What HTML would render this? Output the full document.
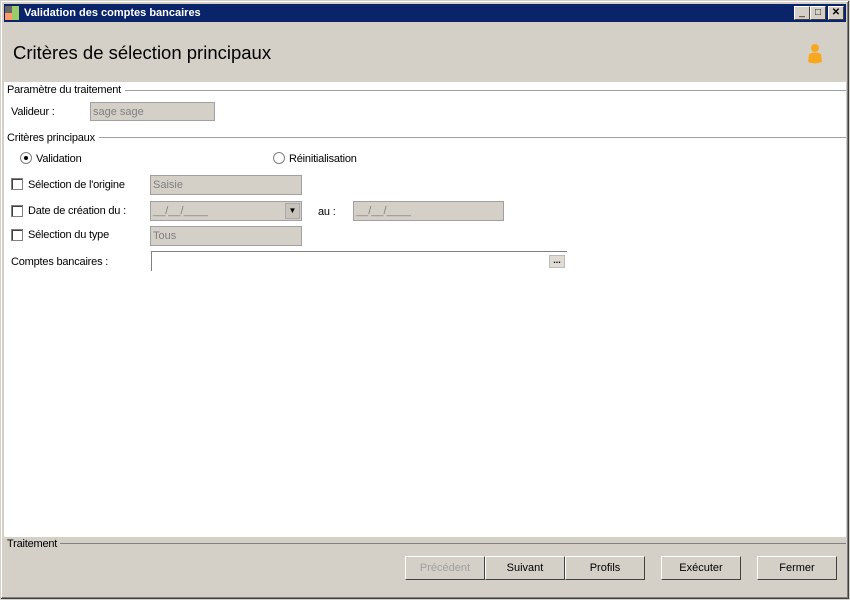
<!DOCTYPE html><html><head><style>
*{margin:0;padding:0;box-sizing:border-box}
body{width:850px;height:600px;background:#d4d0c8;font-family:"Liberation Sans",sans-serif;font-size:11px;color:#000;position:relative;overflow:hidden}
.a{position:absolute}
.win{left:0;top:0;width:850px;height:600px;border:1px solid #d4d0c8;box-shadow:inset -1px -1px #404040,inset 1px 1px #fff,inset -2px -2px #808080}
.title{left:4px;top:4px;width:842px;height:18px;background:#0a246a;color:#fff;font-weight:bold;font-size:11px;line-height:18px;padding-left:20px}
.tb{top:6px;width:16px;height:14px;background:#d4d0c8;border:1px solid;border-color:#fff #404040 #404040 #fff;font-size:10px;text-align:center;line-height:12px;color:#000}
.white{left:4px;top:82px;width:842px;height:455px;background:#fff}
.lbl{font-size:11px;white-space:nowrap;letter-spacing:-0.2px}
.gl{background:#fff;padding-right:4px}
.inp{background:#d4d0c8;border:1px solid #a0a0a0;color:#808080;padding-left:2px;line-height:19px;font-size:11px}
.line{height:1px;background:#a0a0a0}
.cb{width:12px;height:12px;border:1px solid #808080;background:#fff;box-shadow:inset 1px 1px #404040}
.rd{width:12px;height:12px;border-radius:50%;border:1px solid #808080;background:#fff}
.btn{top:556px;height:24px;background:#d4d0c8;border:1px solid;border-color:#fff #404040 #404040 #fff;text-align:center;line-height:22px;font-size:11px}
</style></head><body>
<div class="a win"></div>
<div class="a title">Validation des comptes bancaires</div>
<div class="a" style="left:5px;top:6px;width:7px;height:7px;background:#666"></div>
<div class="a" style="left:12px;top:6px;width:7px;height:14px;background:#9c6"></div>
<div class="a" style="left:5px;top:13px;width:7px;height:7px;background:#f96"></div>
<div class="a tb" style="left:794px">_</div>
<div class="a tb" style="left:810px">□</div>
<div class="a tb" style="left:828px;font-weight:bold">✕</div>
<div class="a" style="left:13px;top:42px;font-size:18.5px">Critères de sélection principaux</div>
<svg class="a" style="left:806px;top:43px" width="18" height="22"><circle cx="9" cy="5" r="4" fill="#f8a820"/><path d="M3 11 Q9 8 15 11 L16 19 Q9 22 2 19Z" fill="#f8a820"/></svg>
<div class="a white"></div>
<div class="a line" style="left:100px;top:90px;width:746px"></div>
<div class="a lbl gl" style="left:7px;top:84px">Paramètre du traitement</div>
<div class="a lbl" style="left:11px;top:106px">Valideur :</div>
<div class="a inp" style="left:90px;top:102px;width:125px;height:19px">sage sage</div>
<div class="a line" style="left:80px;top:137px;width:766px"></div>
<div class="a lbl gl" style="left:7px;top:132px">Critères principaux</div>
<div class="a rd" style="left:20px;top:152px"></div><div class="a" style="left:24px;top:156px;width:4px;height:4px;border-radius:50%;background:#000"></div>
<div class="a lbl" style="left:36px;top:153px">Validation</div>
<div class="a rd" style="left:273px;top:152px"></div>
<div class="a lbl" style="left:289px;top:153px">Réinitialisation</div>
<div class="a cb" style="left:11px;top:178px"></div><div class="a lbl" style="left:28px;top:179px">Sélection de l'origine</div>
<div class="a inp" style="left:150px;top:175px;width:152px;height:20px">Saisie</div>
<div class="a cb" style="left:11px;top:205px"></div><div class="a lbl" style="left:28px;top:205px">Date de création du :</div>
<div class="a inp" style="left:150px;top:201px;width:152px;height:20px">__/__/____</div>
<div class="a" style="left:285px;top:203px;width:15px;height:16px;background:#c8c4bc;border:1px solid #aaa;font-size:8px;text-align:center;line-height:14px">▼</div>
<div class="a lbl" style="left:318px;top:206px">au :</div>
<div class="a inp" style="left:353px;top:201px;width:151px;height:20px">__/__/____</div>
<div class="a cb" style="left:11px;top:229px"></div><div class="a lbl" style="left:28px;top:229px">Sélection du type</div>
<div class="a inp" style="left:150px;top:226px;width:152px;height:20px">Tous</div>
<div class="a lbl" style="left:11px;top:256px">Comptes bancaires :</div>
<div class="a" style="left:151px;top:251px;width:416px;height:20px;border-top:1px solid #808080;border-left:1px solid #808080"></div>
<div class="a" style="left:549px;top:255px;width:16px;height:13px;background:#e0dcd4;border:1px solid #bbb;font-size:9px;text-align:center;line-height:8px;font-weight:bold">...</div>
<div class="a line" style="left:60px;top:543px;width:786px;background:#808080"></div>
<div class="a lbl" style="left:7px;top:538px;background:#d4d0c8;padding-right:3px">Traitement</div>
<div class="a btn" style="left:405px;width:80px;color:#a0a0a0">Précédent</div>
<div class="a btn" style="left:485px;width:80px">Suivant</div>
<div class="a btn" style="left:565px;width:80px">Profils</div>
<div class="a btn" style="left:661px;width:80px">Exécuter</div>
<div class="a btn" style="left:757px;width:80px">Fermer</div>
</body></html>
